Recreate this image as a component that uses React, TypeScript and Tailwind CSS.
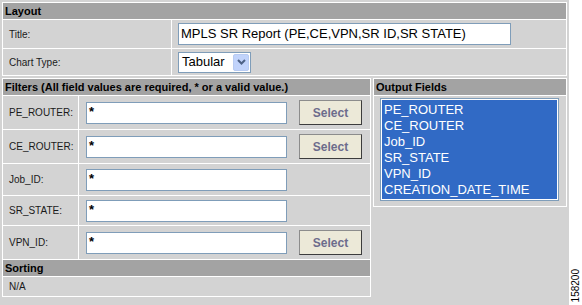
import React from 'react';

const filters = [
  { name: 'PE_ROUTER', select: true, h: 'h-[33px]' },
  { name: 'CE_ROUTER', select: true, h: 'h-[33px]' },
  { name: 'Job_ID', select: false, h: 'h-[31px]' },
  { name: 'SR_STATE', select: false, h: 'h-[29px]' },
  { name: 'VPN_ID', select: true, h: 'h-[33px]' },
];

const outputFields = ['PE_ROUTER', 'CE_ROUTER', 'Job_ID', 'SR_STATE', 'VPN_ID', 'CREATION_DATE_TIME'];

const SectionHeader = ({ title }: { title: string }) => (
  <div className="h-4 bg-[#a3a3a3] pl-[2px] text-[11px] leading-4 font-bold text-black">{title}</div>
);

const SelectButton = () => (
  <button className="ml-3 h-[25px] w-[63px] border border-[#3c3c3c] border-l-[#8c8c8c] border-t-[#8c8c8c] bg-[#ece9d8] text-[12px] font-bold text-[#6c6c8c]">
    Select
  </button>
);

export default function App() {
  return (
    <div className="flex h-[305px] w-[582px] bg-white font-['Liberation_Sans',Arial,sans-serif] text-[10px] text-[#1a1a1a]">
      <div className="flex w-[569px] flex-col bg-[#d3d3d3] pl-[2px] pt-[2px]">
        {/* Layout */}
        <div className="flex w-[565px] flex-col gap-px border border-white bg-white">
          <SectionHeader title="Layout" />
          <div className="flex h-7 gap-px">
            <div className="flex w-[168px] items-center bg-[#d3d3d3] pl-[6px]">Title:</div>
            <div className="flex flex-1 items-center bg-[#d3d3d3] pl-[6px]">
              <div className="flex h-[22px] w-[333px] items-center border border-[#7f9db9] bg-white pl-[2px] text-[13px] text-black">
                MPLS SR Report (PE,CE,VPN,SR ID,SR STATE)
              </div>
            </div>
          </div>
          <div className="flex h-[26px] gap-px">
            <div className="flex w-[168px] items-center bg-[#d3d3d3] pl-[6px]">Chart Type:</div>
            <div className="flex flex-1 items-center bg-[#d3d3d3] pl-[6px]">
              <div className="flex h-[21px] w-[73px] items-center justify-between border border-[#7f9db9] bg-white pl-[3px] pr-px text-[13px] text-black">
                Tabular
                <span className="flex h-[17px] w-[16px] items-center justify-center rounded-[2px] border border-[#b8cbf2] bg-[#c1d3fb]">
                  <svg width="9" height="6" viewBox="0 0 9 6">
                    <path d="M1 1 L4.5 4.5 L8 1" stroke="#4d6185" strokeWidth="2" fill="none" />
                  </svg>
                </span>
              </div>
            </div>
          </div>
        </div>

        <div className="mt-[2px] flex gap-[2px]">
          {/* Filters + Sorting */}
          <div className="flex w-[369px] flex-col gap-px border border-white bg-white">
            <SectionHeader title="Filters (All field values are required, * or a valid value.)" />
            {filters.map((f) => (
              <div key={f.name} className={`flex gap-px ${f.h}`}>
                <div className="flex w-[75px] items-center bg-[#d3d3d3] pl-[6px]">{f.name}:</div>
                <div className="flex flex-1 items-center bg-[#d3d3d3] pl-[7px]">
                  <div className="h-[22px] w-[201px] border border-[#7f9db9] bg-white pl-[2px] pt-px text-[13px] leading-4 font-bold text-black">
                    *
                  </div>
                  {f.select && <SelectButton />}
                </div>
              </div>
            ))}
            <SectionHeader title="Sorting" />
            <div className="flex h-[19px] items-center bg-[#d3d3d3] pl-[6px]">N/A</div>
          </div>

          {/* Output Fields */}
          <div className="flex h-[129px] w-[194px] flex-col gap-px border border-white bg-white">
            <SectionHeader title="Output Fields" />
            <div className="flex-1 bg-[#d3d3d3] pl-[6px] pt-[2px]">
              <div className="w-[179px] border border-[#7f9db9] bg-white p-px">
                <div className="h-[99px] bg-[#316ac5] pl-[2px] pt-[2px] text-[13px] leading-4 text-white">
                  {outputFields.map((o) => (
                    <div key={o}>{o}</div>
                  ))}
                </div>
              </div>
            </div>
          </div>
        </div>
      </div>

      <div className="flex flex-1 items-end justify-center pb-[3px]">
        <span className="rotate-180 text-[10px] leading-none text-black [writing-mode:vertical-rl]">158200</span>
      </div>
    </div>
  );
}
